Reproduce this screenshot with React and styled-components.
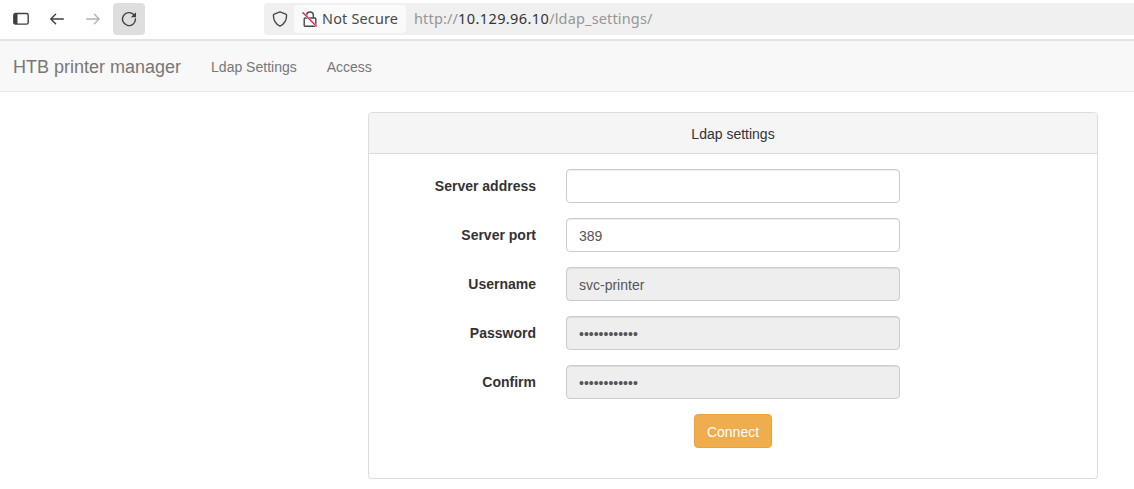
import { useState } from 'react'
import styled, { createGlobalStyle } from 'styled-components'

const GlobalStyle = createGlobalStyle`
    * {
        box-sizing: border-box;
    }

    body {
        margin: 0;
        overflow: hidden;
        background: #fff;
        color: #333;
        font: 14px/20px 'Liberation Sans', Arial, sans-serif;
    }
`

const Toolbar = styled('div')`
    display: flex;
    height: 41px;
    padding: 3px 0 4px 5px;
    border-bottom: 2px solid #e4e4e4;
    background: #fff;
    font: 15px/32px 'Noto Sans', 'Open Sans', sans-serif;
`

const ToolButton = styled('button')`
    display: flex;
    align-items: center;
    justify-content: center;
    width: 32px;
    height: 32px;
    margin-right: 4px;
    padding: 0;
    border: 0;
    border-radius: 4px;
    background: ${(p) => (p.$active ? '#dedede' : 'transparent')};
    color: ${(p) => (p.disabled ? '#b4b4b4' : '#3f3f3f')};
`

const UrlBar = styled('div')`
    display: flex;
    flex-grow: 1;
    align-items: center;
    height: 32px;
    margin-left: 115px;
    padding-left: 8px;
    border-radius: 4px 0 0 4px;
    background: #f0f0f0;
    color: #484848;
`

const Security = styled('span')`
    display: flex;
    align-items: center;
    width: 112px;
    height: 28px;
    margin-left: 6px;
    padding-left: 8px;
    border-radius: 4px;
    background: #fafafa;
    font-size: 14.4px;
    letter-spacing: 0.2px;
    white-space: nowrap;

    svg {
        flex-shrink: 0;
        margin-right: 4px;
    }
`

const Url = styled('span')`
    margin-left: 8px;
    padding-bottom: 2px;
    color: #969696;
    font-size: 14.5px;
    letter-spacing: 0.15px;
    line-height: 30px;
    white-space: nowrap;

    b {
        color: #333;
        font-weight: 400;
        letter-spacing: 0.4px;
    }
`

const Navbar = styled('nav')`
    display: flex;
    align-items: center;
    height: 51px;
    padding: 2px 0 0 13px;
    border-bottom: 1px solid #e7e7e7;
    background: #f8f8f8;
    color: #777;
`

const Brand = styled('span')`
    margin-right: 30px;
    font-size: 18px;
`

const NavLink = styled('span')`
    margin-right: 30px;
`

const Panel = styled('section')`
    width: 730px;
    height: 367px;
    margin: 20px 0 0 368px;
    border: 1px solid #ddd;
    border-radius: 4px;
    background: #fff;
    box-shadow: 0 1px 1px rgba(0, 0, 0, 0.05);
`

const PanelHeading = styled('div')`
    height: 41px;
    padding-top: 11px;
    border-bottom: 1px solid #ddd;
    border-radius: 3px 3px 0 0;
    background: #f5f5f5;
    text-align: center;
`

const Form = styled('form')`
    display: flex;
    flex-direction: column;
    gap: 15px;
    padding-top: 15px;
`

const Row = styled('div')`
    display: flex;
    height: 34px;
`

const Label = styled('label')`
    width: 167px;
    margin-right: 30px;
    padding-top: 7px;
    font-weight: 700;
    text-align: right;
`

const Input = styled('input')`
    width: 334px;
    height: 34px;
    padding: 8px 12px 6px;
    border: 1px solid #ccc;
    border-radius: 4px;
    outline: 0;
    background: ${(p) => (p.disabled ? '#eee' : '#fff')};
    box-shadow: inset 0 1px 1px rgba(0, 0, 0, 0.075);
    color: #555;
    font: inherit;
`

const Connect = styled('button')`
    align-self: center;
    width: 78px;
    height: 34px;
    padding: 2px 0 0;
    border: 1px solid #eea236;
    border-radius: 4px;
    background: #f0ad4e;
    color: #fff;
    font: inherit;
`

const Icon = ({ children, size = 16, stroke = 1.4 }) => (
    <svg
        width={size}
        height={size}
        viewBox="0 0 16 16"
        fill="none"
        stroke="currentColor"
        strokeWidth={stroke}
        strokeLinecap="round"
        strokeLinejoin="round"
    >
        {children}
    </svg>
)

const SidebarIcon = () => (
    <Icon>
        <path d="M2.5 2.5h11a1.7 1.7 0 0 1 1.7 1.7v7.2a1.7 1.7 0 0 1-1.7 1.7h-11a1.7 1.7 0 0 1-1.7-1.7V4.2a1.7 1.7 0 0 1 1.7-1.7z" />
        <path d="M1 4.2q0-1.7 1.5-1.7h2v10.6h-2Q1 13.1 1 11.4z" fill="currentColor" stroke="none" />
    </Icon>
)

const BackIcon = () => (
    <Icon>
        <path d="M14.3 8H1.8M6.6 3.2L1.8 8l4.8 4.8" />
    </Icon>
)

const ForwardIcon = () => (
    <Icon>
        <path d="M1.7 8h12.5M9.4 3.2L14.2 8l-4.8 4.8" />
    </Icon>
)

const ReloadIcon = () => (
    <Icon>
        <path d="M12.7 3.6A6.5 6.5 0 1 0 14.5 8" />
        <path d="M15 1.2v5H9.8z" fill="currentColor" stroke="none" />
    </Icon>
)

const ShieldIcon = () => (
    <Icon>
        <path d="M8 .9l5.8 2.3q.8.3.8 1.1C14.6 9.5 12.6 13 8 15.2 3.4 13 1.4 9.5 1.4 4.3q0-.8.8-1.1z" />
    </Icon>
)

const InsecureIcon = () => (
    <Icon>
        <path d="M4.7 7V4.3a3.3 3.3 0 0 1 6.6 0V7M3.2 7h9.6q1 0 1 1v6.2q0 1-1 1H3.2q-1 0-1-1V8q0-1 1-1z" />
        <path d="M1 1.8l13.2 13.2" stroke="#fafafa" strokeWidth="2" />
        <path d="M1 1.8l13.2 13.2" stroke="#e22850" />
    </Icon>
)

const fields = [
    { id: 'address', label: 'Server address', value: '' },
    { id: 'port', label: 'Server port', value: '389' },
    { id: 'username', label: 'Username', value: 'svc-printer', disabled: true },
    { id: 'password', label: 'Password', value: '************', type: 'password', disabled: true },
    { id: 'confirm', label: 'Confirm', value: '************', type: 'password', disabled: true },
]

const App = () => {
    const [values, setValues] = useState(
        Object.fromEntries(fields.map(({ id, value }) => [id, value]))
    )

    const onChange = (e) => {
        setValues({ ...values, [e.target.id]: e.target.value })
    }

    return (
        <>
            <GlobalStyle />
            <Toolbar>
                <ToolButton aria-label="Sidebar">
                    <SidebarIcon />
                </ToolButton>
                <ToolButton aria-label="Back">
                    <BackIcon />
                </ToolButton>
                <ToolButton aria-label="Forward" disabled>
                    <ForwardIcon />
                </ToolButton>
                <ToolButton aria-label="Reload" $active>
                    <ReloadIcon />
                </ToolButton>
                <UrlBar>
                    <ShieldIcon />
                    <Security>
                        <InsecureIcon />
                        Not Secure
                    </Security>
                    <Url>
                        http://<b>10.129.96.10</b>/ldap_settings/
                    </Url>
                </UrlBar>
            </Toolbar>
            <Navbar>
                <Brand>HTB printer manager</Brand>
                <NavLink>Ldap Settings</NavLink>
                <NavLink>Access</NavLink>
            </Navbar>
            <Panel>
                <PanelHeading>Ldap settings</PanelHeading>
                <Form onSubmit={(e) => e.preventDefault()}>
                    {fields.map(({ id, label, type = 'text', disabled }) => (
                        <Row key={id}>
                            <Label htmlFor={id}>{label}</Label>
                            <Input
                                id={id}
                                type={type}
                                value={values[id]}
                                disabled={disabled}
                                onChange={onChange}
                            />
                        </Row>
                    ))}
                    <Connect type="submit">Connect</Connect>
                </Form>
            </Panel>
        </>
    )
}

export default App
